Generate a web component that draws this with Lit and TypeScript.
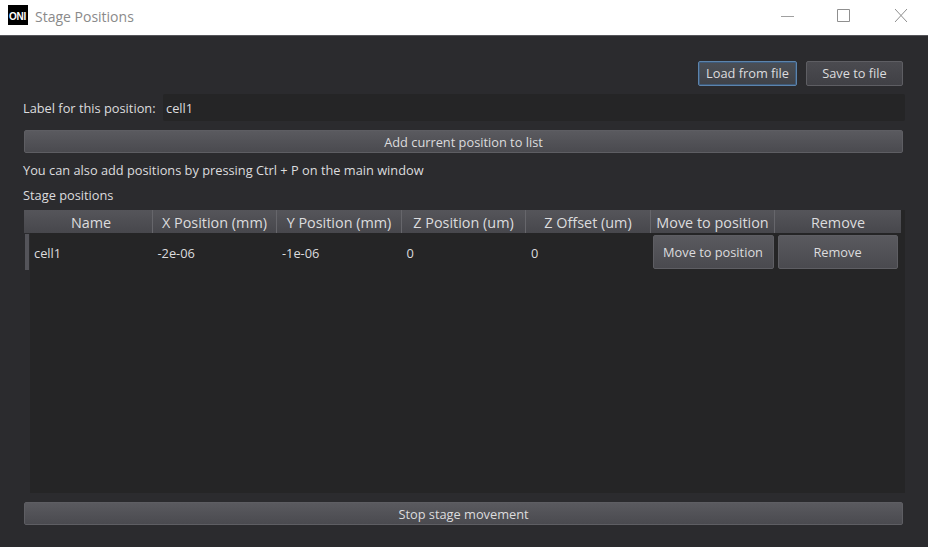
import { LitElement, html, css } from "lit";
import { customElement } from "lit/decorators.js";

const COLS = [
  { t: "Name", w: 129 },
  { t: "X Position (mm)", w: 124 },
  { t: "Y Position (mm)", w: 125 },
  { t: "Z Position (um)", w: 124 },
  { t: "Z Offset (um)", w: 125 },
  { t: "Move to position", w: 124 },
  { t: "Remove", w: 126 },
];
const CELLS = ["-2e-06", "-1e-06", "0", "0"];

@customElement("app-root")
export class AppRoot extends LitElement {
  static styles = css`
    :host { display: block; width: 928px; height: 547px; overflow: hidden; font-family: "Open Sans", "Noto Sans", sans-serif; font-size: 12.8px; color: #dcdcde; background: #2b2b2e; }
    * { box-sizing: border-box; }
    .titlebar { height: 36px; background: #fff; border-bottom: 1px solid #55555a; display: flex; align-items: center; padding-left: 8px; color: #8a8a8a; font-size: 14px; }
    .logo { width: 20px; height: 20px; margin-top: -5px; padding-top: 2px; background: #000; color: #fff; font-size: 10px; font-weight: 700; display: flex; align-items: center; justify-content: flex-start; padding-left: 1px; letter-spacing: -0.2px; margin-right: 7px; overflow: hidden; white-space: nowrap; font-family: "Liberation Sans", sans-serif; }
    .title { flex: 1; margin-top: -3px; }
    .winbtn { height: 13px; display: block; }
    .winbtns { display: flex; padding-right: 21px; margin-top: -5px; }
    .min { width: 13px; margin-right: 43px; }
    .max { width: 13px; margin-right: 45px; }
    .close { width: 12px; }
    .content { display: flex; flex-direction: column; padding: 25px 25px 0 24px; height: 511px; }
    .top { display: flex; justify-content: flex-end; gap: 9px; height: 25px; }
    button { font: inherit; color: #dcdcde; border: 1px solid #5e5e63; border-radius: 2px; background: linear-gradient(#5a5a5f, #4a4a4f); padding: 0; display: block; }
    .top button { height: 25px; padding-bottom: 2px; }
    .load { width: 99px; border-color: #5c84ad; box-shadow: inset 0 0 0 1px #3f5a78; background: linear-gradient(#4b4f56, #3f4248); }
    .save { width: 97px; background: linear-gradient(#4b4b50, #404045); }
    .label-row { display: flex; align-items: center; margin: 8px -2px 0 -1px; height: 27px; }
    .label-row label { width: 140px; }
    .input { flex: 1; height: 27px; background: #252526; border-radius: 2px; padding-left: 3px; display: flex; align-items: center; }
    .wide { height: 23px; width: 100%; }
    .add { margin-top: 9px; }
    .hint { margin: 9px 0 0 -1px; height: 17px; line-height: 17px; }
    .sub { margin: 8px 0 0 -1px; height: 17px; line-height: 17px; }
    .table { margin: 6px -2px 0 0; height: 283px; background: #252526; display: flex; flex-direction: column; }
    .thead { display: flex; height: 23px; }
    .th { background: linear-gradient(#55555a, #47474c); border-right: 1px solid #66666b; display: flex; align-items: center; justify-content: center; font-size: 14.4px; white-space: nowrap; height: 23px; padding-top: 1px; }
    .th:first-child { padding-left: 6px; }
    .th:last-child { border-right: none; }
    .tbody { flex: 1; display: flex; }
    .vhead { width: 6px; background: #2b2b2e; }
    .vhead i { display: block; width: 4px; height: 36px; margin: 1px 0 0 1px; background: #54545a; }
    .row { height: 38px; display: flex; align-items: center; flex: 1; }
    .td { white-space: nowrap; padding: 2px 0 0 4px; }
    .btn-cell { display: flex; }
    .row button { height: 34px; }
    .move { width: 121px; margin-left: 1px; }
    .rem { width: 120px; margin-left: 4px; }
    .stop { margin-top: 9px; }
  `;

  render() {
    return html`
      <div class="titlebar">
        <div class="logo">ONI</div>
        <div class="title">Stage Positions</div>
        <div class="winbtns">
          <svg class="winbtn min" viewBox="0 0 13 13" fill="none" stroke="#a0a0a0"><path d="M0 7.5h13"/></svg>
          <svg class="winbtn max" viewBox="0 0 13 13" fill="none" stroke="#8f8f8f"><path d="M.5.5h12v12H.5z"/></svg>
          <svg class="winbtn close" viewBox="0 0 12 13" fill="none" stroke="#8f8f8f"><path d="M0 0l12 13M12 0L0 13"/></svg>
        </div>
      </div>
      <div class="content">
        <div class="top">
          <button class="load">Load from file</button>
          <button class="save">Save to file</button>
        </div>
        <div class="label-row">
          <label>Label for this position:</label>
          <div class="input">cell1</div>
        </div>
        <button class="wide add">Add current position to list</button>
        <div class="hint">You can also add positions by pressing Ctrl + P on the main window</div>
        <div class="sub">Stage positions</div>
        <div class="table">
          <div class="thead">
            ${COLS.map((c) => html`<div class="th" style="width:${c.w}px">${c.t}</div>`)}
          </div>
          <div class="tbody">
            <div class="vhead"><i></i></div>
            <div class="row">
              <div class="td" style="width:123.5px">cell1</div>
              ${CELLS.map((c) => html`<div class="td" style="width:124.5px">${c}</div>`)}
              <div class="btn-cell">
                <button class="move">Move to position</button>
                <button class="rem">Remove</button>
              </div>
            </div>
          </div>
        </div>
        <button class="wide stop">Stop stage movement</button>
      </div>
    `;
  }
}
